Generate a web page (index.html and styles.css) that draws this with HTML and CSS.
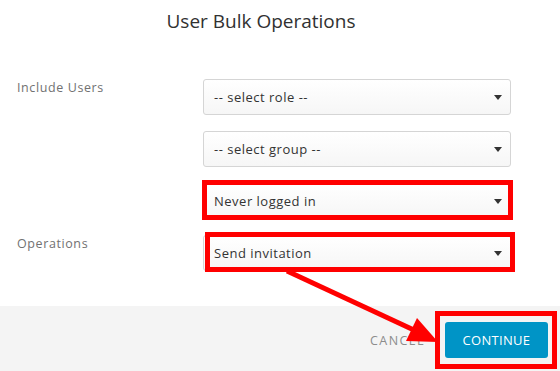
FILE: index.html
```html
<!DOCTYPE html>
<html lang="en">
<head>
  <meta charset="UTF-8">
  <meta name="viewport" content="width=device-width, initial-scale=1.0">
  <title>User Bulk Operations</title>
  <link rel="stylesheet" href="styles.css">
</head>
<body>
  <div class="modal">
    <h1 class="title">User Bulk Operations</h1>

    <div class="form">
      <label class="label">Include Users</label>
      <div class="controls">
        <div class="select"><span>-- select role --</span><i class="caret"></i></div>
        <div class="select"><span>-- select group --</span><i class="caret"></i></div>
        <div class="select"><span>Never logged in</span><i class="caret"></i></div>
      </div>

      <label class="label">Operations</label>
      <div class="controls">
        <div class="select"><span>Send invitation</span><i class="caret"></i></div>
      </div>
    </div>

    <div class="footer">
      <button class="btn-link">Cancel</button>
      <button class="btn-primary">Continue</button>
    </div>

    <!-- red annotation marks drawn over the dialog -->
    <svg class="marks" width="560" height="371" viewBox="0 0 560 371">
      <rect x="204.5" y="182.5" width="306" height="35" fill="none" stroke="#f00" stroke-width="5"/>
      <rect x="207.5" y="234.5" width="305" height="35" fill="none" stroke="#f00" stroke-width="5"/>
      <rect x="437.5" y="313.5" width="117" height="53" fill="none" stroke="#f00" stroke-width="5"/>
      <line x1="287" y1="271" x2="416" y2="331" stroke="#f00" stroke-width="5"/>
      <polygon points="438,342 406,341 417,318" fill="#f00"/>
    </svg>
  </div>
</body>
</html>
```

FILE: styles.css
```css
* {
  margin: 0;
  padding: 0;
  box-sizing: border-box;
}
body {
  background: #fff;
  font-family: 'Open Sans', Lato, sans-serif;
  color: #333;
}
.modal {
  position: relative;
  width: 560px;
  height: 371px;
  overflow: hidden;
}
.title {
  font-size: 19px;
  font-weight: normal;
  line-height: 24px;
  padding: 9px 38px 0 0;
  text-align: center;
  color: #313131;
}
.form {
  display: grid;
  grid-template-columns: 203px 308px;
  row-gap: 16px;
  margin-top: 46px;
}
.label {
  padding-left: 17px;
  font-size: 12.5px;
  line-height: 18px;
  letter-spacing: 0.6px;
  color: #717171;
}
.controls {
  display: flex;
  flex-direction: column;
  gap: 16px;
}
.select {
  display: flex;
  align-items: center;
  justify-content: space-between;
  height: 36px;
  padding: 0 8px 0 10px;
  border: 1px solid #d5d5d5;
  border-radius: 3px;
  background: linear-gradient(to bottom, #fff, #f6f6f6);
  font-size: 13px;
  letter-spacing: 0.5px;
  color: #333;
}
.caret {
  width: 0;
  height: 0;
  border-left: 4.5px solid transparent;
  border-right: 4.5px solid transparent;
  border-top: 5px solid #333;
}
.footer {
  position: absolute;
  left: 0;
  right: 0;
  bottom: 0;
  height: 65px;
  background: #f4f4f4;
  display: flex;
  justify-content: flex-end;
  align-items: flex-start;
  padding: 16px 12px 0 0;
  gap: 20px;
}
.btn-link {
  height: 36px;
  border: none;
  background: none;
  font-family: inherit;
  font-size: 12.5px;
  letter-spacing: 1.4px;
  text-transform: uppercase;
  color: #8c8c8c;
}
.btn-primary {
  width: 103px;
  height: 36px;
  border: none;
  border-radius: 3px;
  background: #0094c6;
  color: #fff;
  font-family: inherit;
  font-size: 13px;
  letter-spacing: 0.3px;
  text-transform: uppercase;
}
.marks {
  position: absolute;
  left: 0;
  top: 0;
}
```
